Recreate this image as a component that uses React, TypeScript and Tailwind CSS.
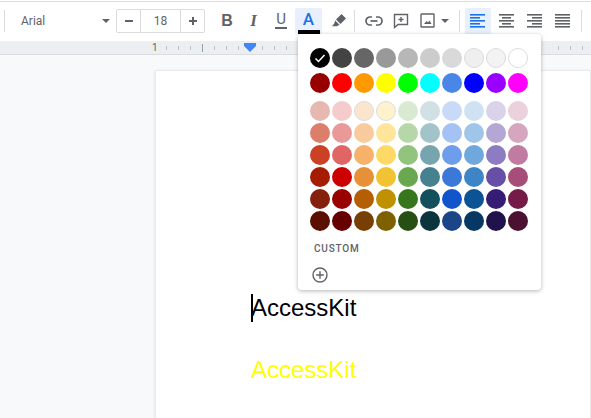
const palette = [
  ['#000000','#434343','#666666','#999999','#b7b7b7','#cccccc','#d9d9d9','#efefef','#f3f3f3','#ffffff'],
  ['#980000','#ff0000','#ff9900','#ffff00','#00ff00','#00ffff','#4a86e8','#0000ff','#9900ff','#ff00ff'],
  ['#e6b8af','#f4cccc','#fce5cd','#fff2cc','#d9ead3','#d0e0e3','#c9daf8','#cfe2f3','#d9d2e9','#ead1dc'],
  ['#dd7e6b','#ea9999','#f9cb9c','#ffe599','#b6d7a8','#a2c4c9','#a4c2f4','#9fc5e8','#b4a7d6','#d5a6bd'],
  ['#cc4125','#e06666','#f6b26b','#ffd966','#93c47d','#76a5af','#6d9eeb','#6fa8dc','#8e7cc3','#c27ba0'],
  ['#a61c00','#cc0000','#e69138','#f1c232','#6aa84f','#45818e','#3c78d8','#3d85c6','#674ea7','#a64d79'],
  ['#85200c','#990000','#b45f06','#bf9000','#38761d','#134f5c','#1155cc','#0b5394','#351c75','#741b47'],
  ['#5b0f00','#660000','#783f04','#7f6000','#274e13','#0c343d','#1c4587','#073763','#20124d','#4c1130'],
];

function Swatch({ c, check }: { c: string; check?: boolean }) {
  const light = ['#efefef', '#f3f3f3', '#ffffff', '#fff2cc', '#fce5cd'].includes(c);
  return (
    <div
      className={`flex h-5 w-5 items-center justify-center rounded-full ${light ? 'border border-[#dadce0]' : ''}`}
      style={{ backgroundColor: c }}
    >
      {check && (
        <svg width="14" height="14" viewBox="0 0 14 14" fill="none" stroke="#fff" strokeWidth="1.5">
          <path d="M2.5 7.5 L5.5 10.5 L11.5 4" />
        </svg>
      )}
    </div>
  );
}

function Sep() {
  return <div className="h-[22px] w-px shrink-0 bg-[#dadce0]" />;
}

function Caret() {
  return <div className="h-0 w-0 border-x-[4px] border-t-[4px] border-x-transparent border-t-[#5f6368]" />;
}

function AlignIcon({ lines, color }: { lines: [number, number][]; color: string }) {
  return (
    <svg width="16" height="16" viewBox="0 0 16 16" fill={color}>
      {lines.map(([x, w], i) => (
        <rect key={i} x={x} y={1 + i * 3} width={w} height="1.6" />
      ))}
    </svg>
  );
}

const rulerTicks = [166, 178, 190, 214, 226, 238, 262, 274, 286, 558, 570, 582];

export default function App() {
  return (
    <div className="relative h-[418px] w-[591px] overflow-hidden bg-[#f8f9fa] font-['Roboto',sans-serif]">
      <div className="h-[2px] border-b border-[#dadce0] bg-white" />
      {/* toolbar */}
      <div className="flex h-[39px] items-center bg-white pb-[2px] text-[#5f6368]">
        <div className="ml-[4px]"><Sep /></div>
        <div className="ml-[16px] flex w-[95px] items-center justify-between pr-[6px] text-[12px]">
          <span>Arial</span>
          <Caret />
        </div>
        <div className="flex h-6 w-[89px] items-center rounded-[2px] border border-[#dadce0] text-[#444746]">
          <div className="flex h-full w-6 items-center justify-center border-r border-[#dadce0]">
            <div className="h-[2px] w-2 bg-[#5f6368]" />
          </div>
          <div className="flex h-full w-10 items-center justify-center border-r border-[#dadce0] text-[12px] text-[#5f6368]">18</div>
          <div className="relative flex h-full flex-1 items-center justify-center">
            <div className="h-[2px] w-2 bg-[#5f6368]" />
            <div className="absolute h-2 w-[2px] bg-[#5f6368]" />
          </div>
        </div>
        <div className="flex w-[32px] justify-center pl-[5px] font-['Liberation_Sans',sans-serif] text-[16px] font-bold">
          <span className="ml-[7px]">B</span>
        </div>
        <div className="flex w-[28px] justify-center font-['Liberation_Serif',serif] text-[17px] font-bold italic">
          <span className="ml-[5px]">I</span>
        </div>
        <div className="flex w-[29px] flex-col items-center">
          <span className="ml-[3px] text-[15px] leading-[15px]">U</span>
          <div className="ml-[3px] h-[2px] w-[12px] bg-[#5f6368]" />
        </div>
        {/* text colour */}
        <div className="ml-[1px] flex h-[26px] w-[27px] flex-col items-center rounded-[2px] bg-[#e8f0fe] text-[#1a73e8]">
          <span className="mt-[2px] text-[17px] font-medium leading-[19px]">A</span>
          <div className="mt-[1px] h-[4px] w-[22px] bg-black" />
        </div>
        <div className="flex w-[33px] justify-center">
          <svg width="16" height="16" viewBox="0 0 16 16" fill="#5f6368">
            <path d="M10.5 1 L15 5.5 L9.5 11 L5 6.5 Z" />
            <path d="M4.2 7.5 L8.5 11.8 L6 13.2 L3.5 13.2 L1 13.2 L3.2 10.5 Z" />
          </svg>
        </div>
        <div className="ml-[-1px]"><Sep /></div>
        <div className="flex w-[37px] justify-center">
          <svg width="18" height="10" viewBox="0 0 18 10" fill="none" stroke="#5f6368" strokeWidth="1.7">
            <path d="M7 1 H5 a4 4 0 0 0 0 8 h2" />
            <path d="M11 1 h2 a4 4 0 0 1 0 8 h-2" />
            <path d="M5.5 5 h7" />
          </svg>
        </div>
        <div className="flex w-[17px] justify-center">
          <svg width="16" height="16" viewBox="0 0 16 16" fill="none" stroke="#5f6368" strokeWidth="1.4" className="shrink-0">
            <path d="M1.5 1.5 H14.5 V11.5 H5 L1.5 14.5 Z" />
            <path d="M8 4 V9 M5.5 6.5 H10.5" />
          </svg>
        </div>
        <div className="ml-[11px] flex w-[15px] justify-center">
          <svg width="15" height="15" viewBox="0 0 15 15" fill="none" stroke="#5f6368" strokeWidth="1.4" className="shrink-0">
            <rect x="1" y="1" width="13" height="13" rx="0.5" />
            <path d="M4 11 L6.5 8 L8 9.5 L9.5 7.5 L11.5 11 Z" fill="#5f6368" stroke="none" />
          </svg>
        </div>
        <div className="ml-[6px]"><Caret /></div>
        <div className="ml-[10px]"><Sep /></div>
        <div className="ml-[5px] flex h-[26px] w-[26px] items-center justify-center rounded-[2px] bg-[#e8f0fe]">
          <AlignIcon color="#1a73e8" lines={[[0,15],[0,10],[0,15],[0,10],[0,15]]} />
        </div>
        <div className="ml-[2px] flex w-[28px] justify-center">
          <AlignIcon color="#5f6368" lines={[[0,15],[3,9],[0,15],[3,9],[0,15]]} />
        </div>
        <div className="flex w-[28px] justify-center">
          <AlignIcon color="#5f6368" lines={[[0,15],[5,10],[0,15],[5,10],[0,15]]} />
        </div>
        <div className="flex w-[27px] justify-center">
          <AlignIcon color="#5f6368" lines={[[0,15],[0,15],[0,15],[0,15],[0,15]]} />
        </div>
        <div className="ml-[5px]"><Sep /></div>
      </div>
      {/* ruler */}
      <div className="relative h-[14px] border-b border-[#dadce0] bg-[#eceff1]">
        <span className="absolute left-[152px] top-0 text-[10px] leading-[14px] text-[#5f6368]">1</span>
        {rulerTicks.map((x) => (
          <div key={x} className="absolute top-[5px] h-[4px] w-px bg-[#bdc1c6]" style={{ left: x }} />
        ))}
        <div className="absolute left-[202px] top-[3px] h-[8px] w-px bg-[#9aa0a6]" />
        <div className="absolute left-[244px] top-[2px] h-[3px] w-[12px] bg-[#4285f4]" />
        <div className="absolute left-[244px] top-[5px] h-0 w-0 border-x-[6px] border-t-[6px] border-x-transparent border-t-[#4285f4]" />
      </div>
      {/* page */}
      <div className="ml-[155px] mt-[15px] h-[400px] border border-[#e8eaed] bg-white pl-[95px] pt-[223px] font-['Liberation_Sans',sans-serif] text-[24px] leading-[28px] shadow-sm">
        <div className="relative text-black">
          <div className="absolute left-0 top-0 h-[28px] w-[2px] bg-black" />
          AccessKit
        </div>
        <div className="mt-[34px] text-[#ffff00]">AccessKit</div>
      </div>
      {/* colour menu */}
      <div className="absolute left-[298px] top-[34px] h-[256px] w-[243px] rounded-[4px] bg-white px-[12px] pt-[14px] shadow-[0_1px_4px_rgba(0,0,0,0.3)]">
        <div className="flex flex-col gap-[2px]">
          {palette.map((row, i) => (
            <div key={i} className={`flex gap-[2px] ${i === 1 ? 'mb-[3px] mt-[3px]' : ''} ${i === 2 ? 'mt-[3px]' : ''}`}>
              {row.map((c, j) => (
                <Swatch key={c + j} c={c} check={i === 0 && j === 0} />
              ))}
            </div>
          ))}
        </div>
        <div className="ml-[4px] mt-[11px] text-[10px] font-medium leading-[14px] tracking-[0.8px] text-[#5f6368]">CUSTOM</div>
        <svg width="16" height="16" viewBox="0 0 16 16" fill="none" stroke="#5f6368" strokeWidth="1.4" className="ml-[2px] mt-[11px]">
          <circle cx="8" cy="8" r="7" />
          <path d="M8 4.2 V11.8 M4.2 8 H11.8" />
        </svg>
      </div>
    </div>
  );
}
